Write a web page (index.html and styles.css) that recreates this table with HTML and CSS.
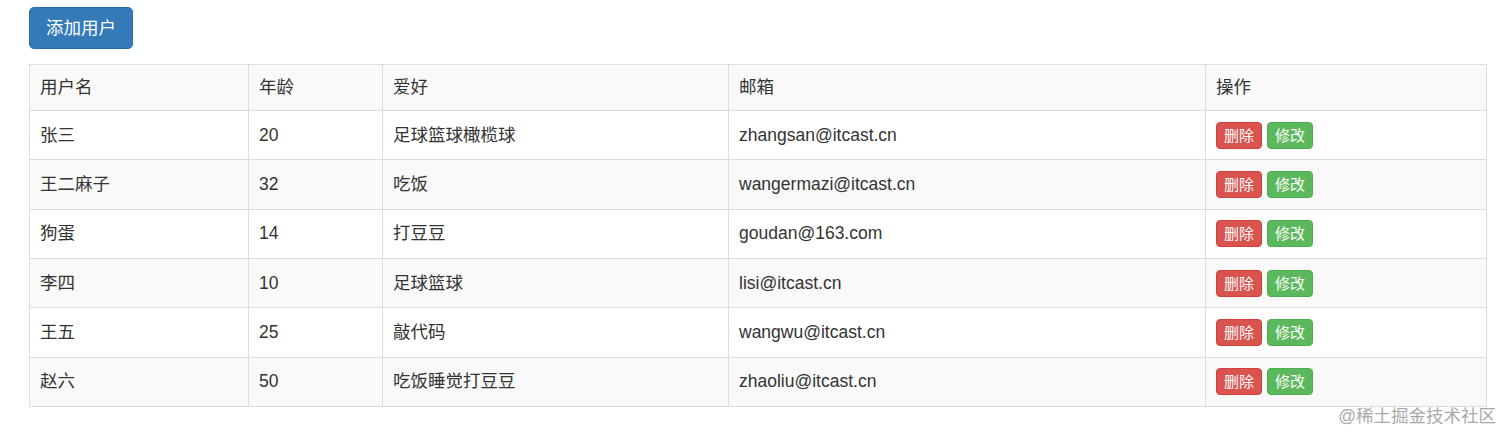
FILE: index.html
```html
<!DOCTYPE html>
<html lang="zh-CN">
<head>
<meta charset="utf-8">
<title>用户列表</title>
<link rel="stylesheet" href="styles.css">
</head>
<body>
<div class="page">
  <button class="btn btn-primary">添加用户</button>
  <table class="table">
    <colgroup>
      <col class="c1"><col class="c2"><col class="c3"><col class="c4"><col class="c5">
    </colgroup>
    <tbody>
      <tr class="head"><td>用户名</td><td>年龄</td><td>爱好</td><td>邮箱</td><td>操作</td></tr>
      <tr class="row"><td>张三</td><td>20</td><td>足球篮球橄榄球</td><td>zhangsan@itcast.cn</td><td><button class="btn btn-xs btn-danger">删除</button> <button class="btn btn-xs btn-success">修改</button></td></tr>
      <tr class="row"><td>王二麻子</td><td>32</td><td>吃饭</td><td>wangermazi@itcast.cn</td><td><button class="btn btn-xs btn-danger">删除</button> <button class="btn btn-xs btn-success">修改</button></td></tr>
      <tr class="row"><td>狗蛋</td><td>14</td><td>打豆豆</td><td>goudan@163.com</td><td><button class="btn btn-xs btn-danger">删除</button> <button class="btn btn-xs btn-success">修改</button></td></tr>
      <tr class="row"><td>李四</td><td>10</td><td>足球篮球</td><td>lisi@itcast.cn</td><td><button class="btn btn-xs btn-danger">删除</button> <button class="btn btn-xs btn-success">修改</button></td></tr>
      <tr class="row"><td>王五</td><td>25</td><td>敲代码</td><td>wangwu@itcast.cn</td><td><button class="btn btn-xs btn-danger">删除</button> <button class="btn btn-xs btn-success">修改</button></td></tr>
      <tr class="row"><td>赵六</td><td>50</td><td>吃饭睡觉打豆豆</td><td>zhaoliu@itcast.cn</td><td><button class="btn btn-xs btn-danger">删除</button> <button class="btn btn-xs btn-success">修改</button></td></tr>
    </tbody>
  </table>
</div>
<div class="watermark">@稀土掘金技术社区</div>
</body>
</html>
```

FILE: styles.css
```css
html, body {
  margin: 0;
  padding: 0;
  background: #fff;
}
body {
  font-family: "Liberation Sans", Arial, "Noto Sans CJK SC", sans-serif;
  font-size: 17.5px;
  line-height: 25px;
  color: #333;
}
.page {
  padding: 7px 26px 0 29px;
}
.btn {
  display: inline-block;
  font-family: inherit;
  border: 1px solid transparent;
  cursor: pointer;
  color: #fff;
  vertical-align: middle;
}
.btn-primary {
  font-size: 17.5px;
  line-height: 25px;
  padding: 7.5px 16px;
  border-radius: 5px;
  background: #337ab7;
  border-color: #2e6da4;
}
.btn-xs {
  font-size: 15px;
  line-height: 23px;
  padding: 1px 7px;
  border-radius: 4px;
}
.btn-danger {
  background: #d9534f;
  border-color: #d43f3a;
}
.btn-success {
  background: #5cb85c;
  border-color: #4cae4c;
}
.table {
  margin-top: 15px;
  width: 1457px;
  border-collapse: collapse;
  border-spacing: 0;
  table-layout: fixed;
  border: 1px solid #ddd;
}
.c1 { width: 219px; }
.c2 { width: 134px; }
.c3 { width: 346px; }
.c4 { width: 477px; }
.c5 { width: 281px; }
.table td {
  border: 1px solid #ddd;
  padding: 10px;
  vertical-align: middle;
  text-align: left;
}
.table .row td {
  height: 28.33px;
}
.table tr:nth-child(odd) {
  background: #f9f9f9;
}
.watermark {
  position: absolute;
  right: 16px;
  top: 404px;
  font-size: 17.5px;
  line-height: 25px;
  color: #a9a9a9;
}
```
